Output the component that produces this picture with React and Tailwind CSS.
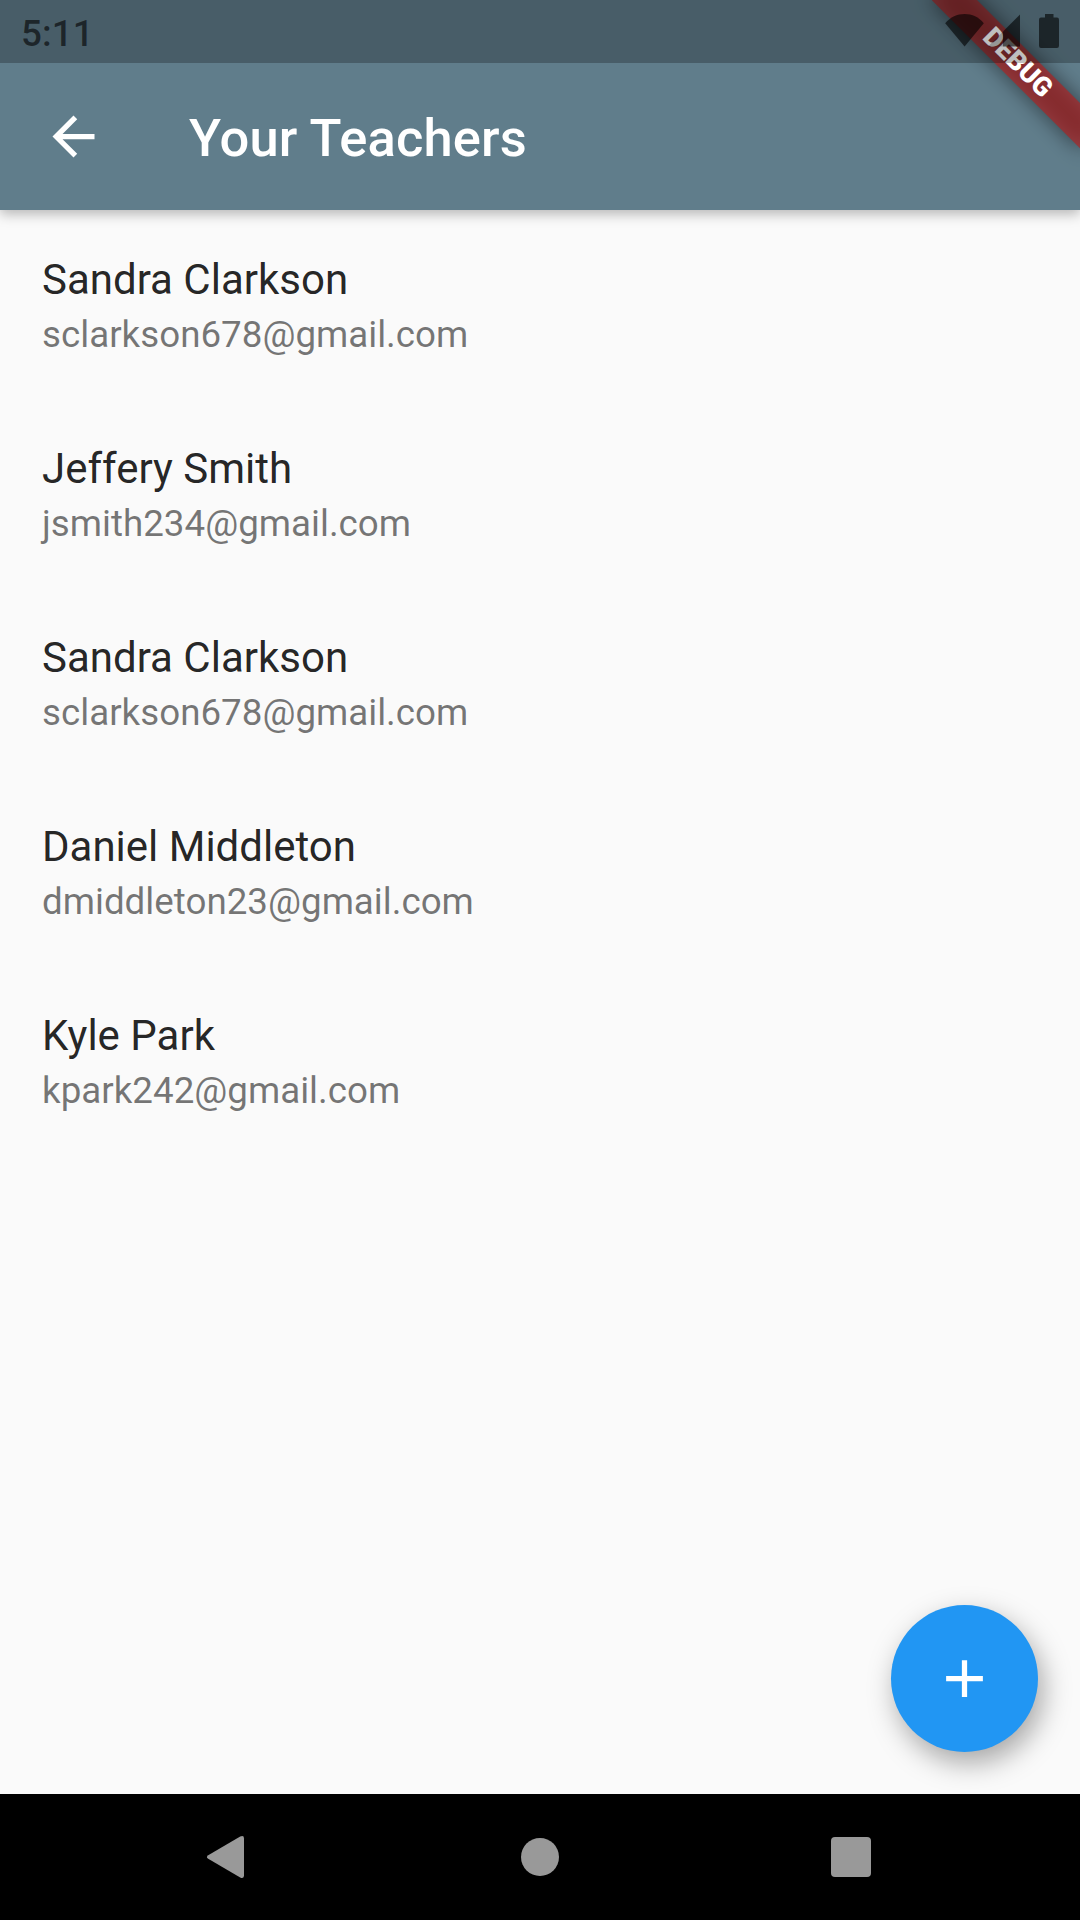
const teachers = [
  { id: 1, name: "Sandra Clarkson", email: "sclarkson678@gmail.com" },
  { id: 2, name: "Jeffery Smith", email: "jsmith234@gmail.com" },
  { id: 3, name: "Sandra Clarkson", email: "sclarkson678@gmail.com" },
  { id: 4, name: "Daniel Middleton", email: "dmiddleton23@gmail.com" },
  { id: 5, name: "Kyle Park", email: "kpark242@gmail.com" },
];

function StatusBar() {
  return (
    <div className="absolute inset-x-0 top-0 z-20 h-[63px] bg-black/25 text-black/60 flex items-start justify-between pl-[21px] pr-[20px]">
      <span className="mt-[12px] text-[36.75px] leading-[43px] font-medium tracking-[0.1px]">5:11</span>
      <svg className="mt-[12px]" width="116" height="38" viewBox="0 0 116 38" fill="currentColor">
        {/* wifi */}
        <path d="M20.6 34.5 L1.2 11.2 C6.5 5 13 2 20.6 2 C28.2 2 34.7 5 39.8 11.2 Z" />
        {/* signal */}
        <path d="M59 19.5 V34.5 H44 Z" fillOpacity="0.35" />
        <path d="M76 2.5 V34.5 H59 V19.5 Z" />
        {/* battery */}
        <path d="M101 2 H109.5 V5.5 H113 Q115 5.5 115 7.8 V33.7 Q115 36 113 36 H97 Q95 36 95 33.7 V7.8 Q95 5.5 97 5.5 H101 Z" />
      </svg>
    </div>
  );
}

/** Diagonal ribbon in the top-right corner. */
function DebugBanner() {
  return (
    <div className="absolute right-0 top-0 z-10 w-[260px] h-[260px] overflow-hidden pointer-events-none">
      <div className="absolute -right-[105px] top-[72.5px] w-[210px] h-[31.5px] rotate-45 origin-[50%_-72.5px]">
        <div className="absolute inset-0 bg-black/50 blur-[10.4px]" />
        <div className="absolute inset-0 bg-[#b71c1c]/[0.627] flex items-center justify-center text-white text-[26.775px] leading-none font-black">
          DEBUG
        </div>
      </div>
    </div>
  );
}

function AppBar({ title }) {
  return (
    <header className="relative z-[1] shrink-0 h-[210px] pt-[63px] bg-[#607d8b] shadow-[0_4px_12px_rgba(0,0,0,0.28)] flex items-center">
      <button className="ml-[42px] text-white" aria-label="back">
        <svg width="63" height="63" viewBox="0 0 24 24" fill="currentColor">
          <path d="M20 11H7.83l5.59-5.59L12 4l-8 8 8 8 1.41-1.41L7.83 13H20v-2z" />
        </svg>
      </button>
      <h1 className="ml-[84px] mt-[2px] text-white text-[52.5px] leading-[62px] font-medium tracking-[0.15px]">{title}</h1>
    </header>
  );
}

function TeacherTile({ teacher }) {
  return (
    <li className="h-[189px] pt-[45px] px-[42px]">
      <div className="text-[42px] leading-[49px] text-black/87">{teacher.name}</div>
      <div className="mt-[9px] text-[36.75px] leading-[43px] text-black/54">{teacher.email}</div>
    </li>
  );
}

function NavBar() {
  return (
    <nav className="shrink-0 h-[126px] bg-black text-[#999999] flex justify-center items-center">
      <button className="w-[311px] flex justify-center" aria-label="back">
        <svg width="48" height="48" viewBox="0 0 48 48" fill="currentColor">
          <path d="M3.2 22.2 L35.2 3.6 Q39 2 39 5.5 V42.5 Q39 46 35.2 44.4 L3.2 25.8 Q.6 24 3.2 22.2 Z" />
        </svg>
      </button>
      <button className="w-[311px] flex justify-center" aria-label="home">
        <span className="w-[37.5px] h-[37.5px] rounded-full bg-current" />
      </button>
      <button className="w-[311px] flex justify-center" aria-label="recents">
        <span className="w-[40px] h-[40px] rounded-[4px] bg-current" />
      </button>
    </nav>
  );
}

export default function App() {
  return (
    <div className="relative w-[1080px] h-[1920px] overflow-hidden bg-[#fafafa] font-[Roboto,sans-serif] flex flex-col">
      <AppBar title="Your Teachers" />
      <main className="relative flex-1">
        <ul>
          {teachers.map((t) => (
            <TeacherTile key={t.id} teacher={t} />
          ))}
        </ul>
        <button
          className="absolute right-[42px] bottom-[42px] w-[147px] h-[147px] rounded-full bg-[#2196f3] text-white shadow-[5px_11px_28px_rgba(0,0,0,0.34)] flex items-center justify-center"
          aria-label="add teacher"
        >
          <svg width="63" height="63" viewBox="0 0 24 24" fill="currentColor">
            <path d="M19 13h-6v6h-2v-6H5v-2h6V5h2v6h6v2z" />
          </svg>
        </button>
      </main>
      <NavBar />
      <DebugBanner />
      <StatusBar />
    </div>
  );
}
